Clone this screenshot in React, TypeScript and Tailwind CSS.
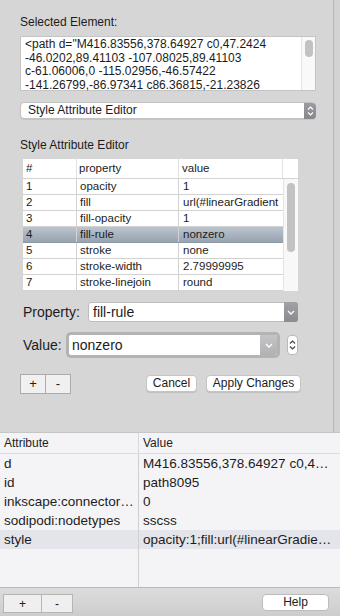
import React from "react";

const styleRows = [
  ["1", "opacity", "1"],
  ["2", "fill", "url(#linearGradient"],
  ["3", "fill-opacity", "1"],
  ["4", "fill-rule", "nonzero"],
  ["5", "stroke", "none"],
  ["6", "stroke-width", "2.79999995"],
  ["7", "stroke-linejoin", "round"],
];

const attrRows = [
  ["d", "M416.83556,378.64927 c0,4…"],
  ["id", "path8095"],
  ["inkscape:connector…", "0"],
  ["sodipodi:nodetypes", "sscss"],
  ["style", "opacity:1;fill:url(#linearGradie…"],
];

function ChevronDown({ color = "#fff" }: { color?: string }) {
  return (
    <svg width="8" height="5" viewBox="0 0 8 5">
      <path d="M1 1 L4 4 L7 1" fill="none" stroke={color} strokeWidth="1.3" />
    </svg>
  );
}

function UpDown({ color = "#fff" }: { color?: string }) {
  return (
    <svg width="7" height="12" viewBox="0 0 7 12">
      <path d="M1 4.5 L3.5 2 L6 4.5" fill="none" stroke={color} strokeWidth="1.2" />
      <path d="M1 7.5 L3.5 10 L6 7.5" fill="none" stroke={color} strokeWidth="1.2" />
    </svg>
  );
}

export default function App() {
  return (
    <div className="w-[340px] h-[616px] flex flex-col bg-[#d3d3d3] text-[#1c1c1c] font-['Liberation_Sans',Arial,sans-serif] overflow-hidden">
      {/* upper panel */}
      <div className="h-[432px] flex">
        <div className="w-[334px] bg-[#d6d6d6] border-r border-[#b8b8b8] pl-[20px] pt-[14px] flex flex-col">
          <div className="text-[12px] leading-[16px]">Selected Element:</div>

          {/* text area */}
          <div className="mt-[6px] w-[296px] h-[55px] bg-white border border-[#c4c4c4] flex">
            <div className="flex-1 pl-[4px] pt-px text-[12px] leading-[13.5px] whitespace-nowrap">
              <div>&lt;path d="M416.83556,378.64927 c0,47.2424</div>
              <div>-46.0202,89.41103 -107.08025,89.41103</div>
              <div>c-61.06006,0 -115.02956,-46.57422</div>
              <div>-141.26799,-86.97341 c86.36815,-21.23826</div>
            </div>
            <div className="w-[14px] bg-[#f9f9f9] border-l border-[#e2e2e2] flex justify-center pt-[3px]">
              <div className="w-[8px] h-[17px] rounded-full bg-[#c2c2c2]" />
            </div>
          </div>

          {/* mode select */}
          <div className="mt-[11px] w-[296px] h-[17px] bg-white rounded-[4px] border border-[#c2c2c2] flex items-center shadow-[0_1px_0_rgba(0,0,0,0.08)]">
            <div className="flex-1 pl-[7px] text-[12px] leading-[15px]">Style Attribute Editor</div>
            <div className="w-[12px] h-[16px] -mr-px rounded-r-[4px] bg-gradient-to-b from-[#9c9ca0] to-[#86868b] flex items-center justify-center">
              <UpDown />
            </div>
          </div>

          <div className="mt-[18px] text-[12px] leading-[16px]">Style Attribute Editor</div>

          {/* style table */}
          <div className="ml-[3px] mt-[6px] w-[275px] bg-white text-[11.5px]">
            <div className="flex h-[20px] border-b border-[#d4d4d4] items-center">
              <div className="w-[54px] h-full border-r border-[#e2e2e2] pl-[3px] flex items-center">#</div>
              <div className="w-[102px] h-full border-r border-[#e2e2e2] pl-[2px] flex items-center">property</div>
              <div className="w-[104px] h-full border-r border-[#e2e2e2] pl-[3px] flex items-center">value</div>
              <div className="w-[15px] h-full" />
            </div>
            <div className="flex">
              <div className="w-[260px]">
                {styleRows.map((r) => (
                  <div
                    key={r[0]}
                    className={
                      r[0] === "4"
                        ? "flex h-[16px] border-b border-[#8d98a6] bg-gradient-to-b from-[#bcc4ce] to-[#98a3b1]"
                        : "flex h-[16px] border-b border-[#d2d2d2]"
                    }
                  >
                    <div className="w-[54px] border-r border-[#d2d2d2] pl-[3px] leading-[15px]">{r[0]}</div>
                    <div className="w-[102px] border-r border-[#d2d2d2] pl-[3px] leading-[15px]">{r[1]}</div>
                    <div className="flex-1 pl-[4px] leading-[15px] whitespace-nowrap">{r[2]}</div>
                  </div>
                ))}
              </div>
              <div className="w-[15px] bg-[#f8f8f8] border-l border-[#e4e4e4] flex justify-center pt-[4px]">
                <div className="w-[8px] h-[69px] rounded-full bg-[#c2c2c2]" />
              </div>
            </div>
          </div>

          {/* property */}
          <div className="mt-[11px] ml-[3px] flex items-center h-[20px]">
            <div className="w-[65px] text-[14px]">Property:</div>
            <div className="w-[210px] h-[20px] bg-white border border-[#bdbdbd] rounded-[3px] flex items-center">
              <div className="flex-1 pl-[4px] text-[14px] leading-[18px]">fill-rule</div>
              <div className="w-[14px] h-[20px] -mr-px rounded-r-[3px] bg-gradient-to-b from-[#a2a2a6] to-[#8a8a8f] flex items-center justify-center">
                <ChevronDown />
              </div>
            </div>
          </div>

          {/* value */}
          <div className="mt-[10px] ml-[3px] flex items-center h-[26px]">
            <div className="w-[43px] text-[14px]">Value:</div>
            <div className="w-[214px] h-[26px] rounded-[5px] bg-[#b3b3b3] p-[3px]">
              <div className="h-full bg-white rounded-[2px] flex items-center">
                <div className="flex-1 pl-[3px] text-[14px] leading-[18px]">nonzero</div>
                <div className="w-[17px] h-full rounded-r-[2px] bg-gradient-to-b from-[#c4c4c6] to-[#b2b2b5] flex items-center justify-center">
                  <ChevronDown />
                </div>
              </div>
            </div>
            <div className="ml-[7px] w-[11px] h-[20px] bg-white border border-[#b9b9b9] rounded-[4px] flex items-center justify-center">
              <UpDown color="#444" />
            </div>
          </div>

          {/* buttons */}
          <div className="mt-[16px] flex items-start">
            <div className="flex">
              <div className="w-[26px] h-[20px] bg-[#f0f0f0] border border-[#acacac] flex items-center justify-center text-[13px]">+</div>
              <div className="w-[26px] h-[20px] -ml-px bg-[#f0f0f0] border border-[#acacac] flex items-center justify-center text-[13px]">-</div>
            </div>
            <div className="ml-[75px] mt-px w-[51px] h-[17px] bg-white border border-[#c4c4c4] rounded-[4px] text-[12px] leading-[15px] text-center shadow-[0_1px_0_rgba(0,0,0,0.1)]">
              Cancel
            </div>
            <div className="ml-[9px] mt-px w-[95px] h-[17px] bg-white border border-[#c4c4c4] rounded-[4px] text-[12px] leading-[15px] text-center shadow-[0_1px_0_rgba(0,0,0,0.1)]">
              Apply Changes
            </div>
          </div>
        </div>
        <div className="flex-1 bg-[#d2d2d2]" />
      </div>

      {/* attribute table */}
      <div className="flex-1 flex flex-col bg-[#f4f4f7] border-t border-[#c6c6c6]">
        <div className="flex h-[21px] border-b border-[#dcdcdf] text-[12px] items-center">
          <div className="w-[139px] h-full border-r border-[#d8d8db] pl-[4px] flex items-center">Attribute</div>
          <div className="flex-1 pl-[4px]">Value</div>
        </div>
        <div className="flex-1 flex flex-col text-[13.5px]">
          {attrRows.map((r) => (
            <div key={r[0]} className={r[0] === "style" ? "flex h-[19px] bg-[#e3e5ea]" : "flex h-[19px]"}>
              <div className="w-[139px] border-r border-[#cfcfd2] pl-[4px] leading-[19px] whitespace-nowrap">{r[0]}</div>
              <div className="flex-1 pl-[4px] leading-[19px] whitespace-nowrap">{r[1]}</div>
            </div>
          ))}
          <div className="flex-1 flex">
            <div className="w-[139px] border-r border-[#cfcfd2]" />
          </div>
        </div>
        <div className="h-[29px] bg-gradient-to-b from-[#dcdcdc] to-[#cdcdcd] border-t border-[#b9b9b9] flex items-start pt-[6px] pl-[3px] pr-[11px]">
          <div className="w-[39px] h-[19px] bg-[#efefef] border border-[#b5b5b5] flex items-center justify-center text-[12px]">+</div>
          <div className="w-[32px] h-[19px] -ml-px bg-[#efefef] border border-[#b5b5b5] flex items-center justify-center text-[12px]">-</div>
          <div className="ml-auto w-[67px] h-[17px] bg-white border border-[#bcbcbc] rounded-[4px] text-[12px] leading-[15px] text-center">
            Help
          </div>
        </div>
      </div>
    </div>
  );
}
